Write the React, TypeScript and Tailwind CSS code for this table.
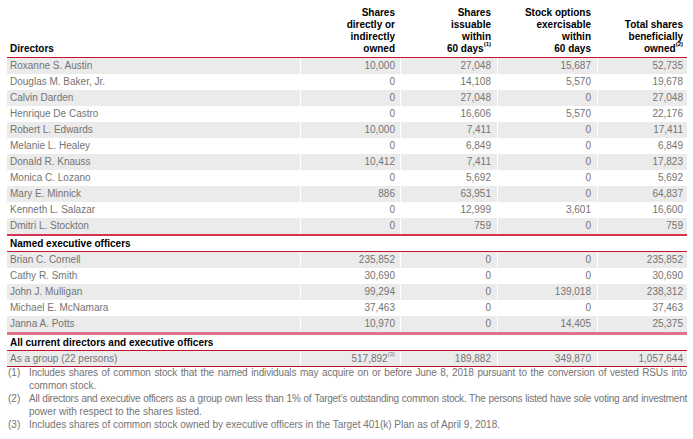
import React from "react";

type Row = [string, string, string, string, string];

const directors: Row[] = [
  ["Roxanne S. Austin", "10,000", "27,048", "15,687", "52,735"],
  ["Douglas M. Baker, Jr.", "0", "14,108", "5,570", "19,678"],
  ["Calvin Darden", "0", "27,048", "0", "27,048"],
  ["Henrique De Castro", "0", "16,606", "5,570", "22,176"],
  ["Robert L. Edwards", "10,000", "7,411", "0", "17,411"],
  ["Melanie L. Healey", "0", "6,849", "0", "6,849"],
  ["Donald R. Knauss", "10,412", "7,411", "0", "17,823"],
  ["Monica C. Lozano", "0", "5,692", "0", "5,692"],
  ["Mary E. Minnick", "886", "63,951", "0", "64,837"],
  ["Kenneth L. Salazar", "0", "12,999", "3,601", "16,600"],
  ["Dmitri L. Stockton", "0", "759", "0", "759"],
];

const officers: Row[] = [
  ["Brian C. Cornell", "235,852", "0", "0", "235,852"],
  ["Cathy R. Smith", "30,690", "0", "0", "30,690"],
  ["John J. Mulligan", "99,294", "0", "139,018", "238,312"],
  ["Michael E. McNamara", "37,463", "0", "0", "37,463"],
  ["Janna A. Potts", "10,970", "0", "14,405", "25,375"],
];

const grid = "grid grid-cols-[293px_100px_97px_100px_90px]";

function DataRow({ r, gray, sup, h = "h-[16px] leading-[16px]" }: { r: Row; gray: boolean; sup?: string; h?: string }) {
  return (
    <div className={`${grid} ${h} text-[10px] text-[#747474] ${gray ? "bg-[#ebebeb]" : "bg-white"}`}>
      <div className="pl-[3px]">{r[0]}</div>
      <div className="border-l border-white pr-[5px] text-right">
        {r[1]}
        {sup && <sup className="align-[3px] text-[6px] leading-none">{sup}</sup>}
      </div>
      <div className="border-l border-white pr-[6px] text-right">{r[2]}</div>
      <div className="border-l border-white pr-[6px] text-right">{r[3]}</div>
      <div className="border-l border-white pr-[4px] text-right">{r[4]}</div>
    </div>
  );
}

function SectionRow({ label }: { label: string }) {
  return <div className="flex h-[15px] items-center pl-[3px] text-[10px] font-bold text-black">{label}</div>;
}

export default function App() {
  return (
    <div
      className="h-[439px] w-[693px] overflow-hidden bg-white pl-[7px] pt-[7px]"
      style={{ fontFamily: '"Liberation Sans", Arial, sans-serif' }}
    >
      <div className="w-[680px]">
        {/* Header */}
        <div className={`${grid} items-end pb-[2px] text-[10px] font-bold leading-[12px] text-black`}>
          <div className="pl-[3px]">Directors</div>
          <div className="pr-[5px] text-right">
            Shares
            <br />
            directly or
            <br />
            indirectly
            <br />
            owned
          </div>
          <div className="pr-[6px] text-right">
            Shares
            <br />
            issuable
            <br />
            within
            <br />
            60 days<sup className="align-[3px] text-[6px] leading-none">(1)</sup>
          </div>
          <div className="pr-[6px] text-right">
            Stock options
            <br />
            exercisable
            <br />
            within
            <br />
            60 days
          </div>
          <div className="pr-[4px] text-right">
            Total shares
            <br />
            beneficially
            <br />
            owned<sup className="align-[3px] text-[6px] leading-none">(2)</sup>
          </div>
        </div>
        <div className="h-[1px] bg-[#c8102e]" />

        {directors.map((r, i) => (
          <DataRow key={r[0]} r={r} gray={i % 2 === 0} />
        ))}
        <div className="h-[2px] bg-[#d4344f]" />

        <SectionRow label="Named executive officers" />
        <div className="h-[1px] bg-[#c8102e]" />

        {officers.map((r, i) => (
          <DataRow key={r[0]} r={r} gray={i % 2 === 0} />
        ))}
        <div className="h-[3px] bg-[#df7488]" />

        <SectionRow label="All current directors and executive officers" />
        <div className="h-[1px] bg-[#c8102e]" />
        <DataRow
          r={["As a group (22 persons)", "517,892", "189,882", "349,870", "1,057,644"]}
          gray
          sup="(3)"
          h="h-[15px] leading-[15px]"
        />
        <div className="h-[1px] bg-[#b5102b]" />

        {/* Footnotes */}
        <div className="text-[10px] leading-[12.5px] text-[#747474]">
          <div className="grid grid-cols-[21px_1fr] pl-[1px]">
            <div>(1)</div>
            <div>
              <div className="text-justify tracking-[-0.15px] [text-align-last:justify]">
                Includes shares of common stock that the named individuals may acquire on or before June 8, 2018
                pursuant to the conversion of vested RSUs into
              </div>
              <div>common stock.</div>
            </div>
          </div>
          <div className="mt-[1px] grid grid-cols-[21px_1fr] pl-[1px]">
            <div>(2)</div>
            <div>
              <div className="text-justify tracking-[-0.25px] [text-align-last:justify]">
                All directors and executive officers as a group own less than 1% of Target’s outstanding common
                stock. The persons listed have sole voting and investment
              </div>
              <div>power with respect to the shares listed.</div>
            </div>
          </div>
          <div className="mt-[1px] grid grid-cols-[21px_1fr] pl-[1px]">
            <div>(3)</div>
            <div>
              Includes shares of common stock owned by executive officers in the Target 401(k) Plan as of April 9,
              2018.
            </div>
          </div>
        </div>
      </div>
    </div>
  );
}
